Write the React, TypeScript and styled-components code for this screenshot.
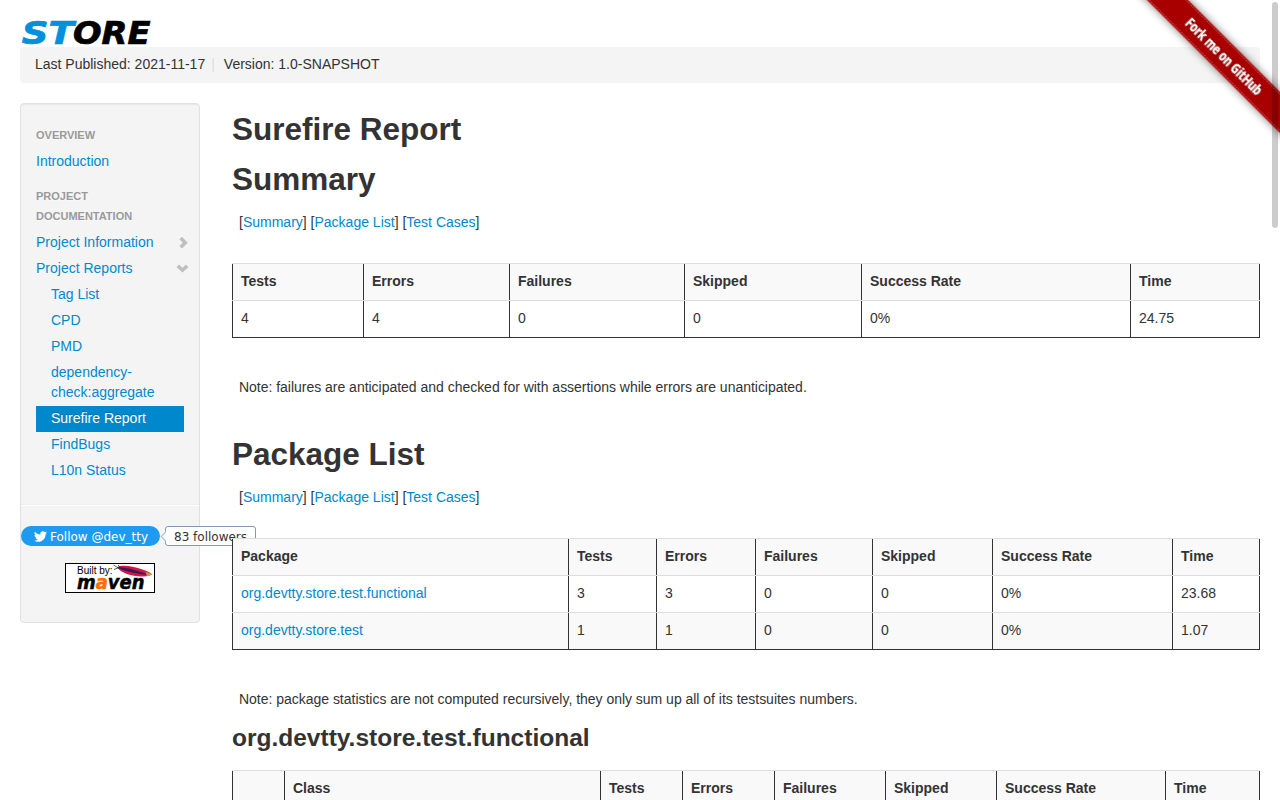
import React from 'react';
import styled, { createGlobalStyle, css } from 'styled-components';

const GlobalStyle = createGlobalStyle`
  * { box-sizing: border-box; }
  html { height: 100%; overflow: hidden; }
  body {
    margin: 0;
    height: 100%;
    overflow: hidden;
    background: #fff;
    color: #333;
    font-family: 'Helvetica Neue', Helvetica, 'Liberation Sans', Arial, sans-serif;
    font-size: 14px;
    line-height: 20px;
  }
`;

const Page = styled.div`
  position: relative;
  height: 800px;
  overflow: hidden;
  padding: 20px 20px 0;
`;

const Logo = styled.svg`
  display: block;
  width: 132px;
  height: 27px;
  overflow: visible;
`;

const Breadcrumb = styled.ul`
  display: flex;
  height: 36px;
  margin: 0 0 20px;
  padding: 7px 15px 9px;
  list-style: none;
  border-radius: 4px;
  background: #f4f4f4;
`;

const Divider = styled.span`
  padding: 0 9px 0 6px;
  color: #ddd;
`;

const Columns = styled.div`
  display: flex;
  align-items: flex-start;
  gap: 32px;
`;

const Sidebar = styled.aside`
  flex: none;
  width: 180px;
  height: 520px;
  padding: 19px 0 0;
  border: 1px solid #e1e1e1;
  border-radius: 4px;
  background: #f4f4f4;
  box-shadow: inset 0 1px 1px rgba(0, 0, 0, 0.05);
`;

const NavList = styled.ul`
  margin: 0;
  padding: 0 15px;
  list-style: none;
  text-shadow: 0 1px 0 rgba(255, 255, 255, 0.5);
`;

const NavHeader = styled.li<{ $spaced?: boolean }>`
  margin-top: ${(p) => (p.$spaced ? '9px' : 0)};
  padding: 2px 0 4px;
  font-size: 11px;
  font-weight: bold;
  color: #999;
  text-transform: uppercase;
`;

const NavItem = styled.li<{ $nested?: boolean; $active?: boolean }>`
  display: flex;
  justify-content: space-between;
  align-items: center;
  padding: 2px ${(p) => (p.$nested ? 15 : 0)}px 4px;
  color: #08c;
  ${(p) =>
    p.$active &&
    css`
      color: #fff;
      background: #08c;
      text-shadow: 0 -1px 0 rgba(0, 0, 0, 0.2);
    `}
`;

const Chevron = styled.svg`
  flex: none;
  width: 14px;
  height: 14px;
  margin-right: -6px;
`;

const Rule = styled.hr`
  height: 2px;
  margin: 20px 0;
  border: 0;
  border-top: 1px solid #eee;
  background: #fff;
`;

const FollowRow = styled.div`
  display: flex;
  align-items: center;
  width: 236px;
  height: 20px;
  font: 12px/20px 'DejaVu Sans', sans-serif;
`;

const FollowButton = styled.span`
  display: flex;
  align-items: center;
  flex: none;
  width: 139px;
  height: 20px;
  padding-left: 13px;
  gap: 3px;
  border-radius: 10px;
  background: #1d9bf0;
  color: #fff;
  white-space: nowrap;
`;

const FollowLabel = styled.span`
  padding-top: 2px;
`;

const Bird = styled.svg`
  width: 13px;
  height: 13px;
`;

const FollowerCount = styled.span`
  position: relative;
  flex: none;
  width: 91px;
  height: 20px;
  margin-left: 5px;
  padding-left: 8px;
  border: 1px solid #8099b0;
  border-radius: 3px;
  background: #fff;
  line-height: 20px;
  white-space: nowrap;

  &::before {
    content: '';
    position: absolute;
    left: -4px;
    top: 6px;
    width: 6px;
    height: 6px;
    border: solid #a5b5c5;
    border-width: 0 0 1px 1px;
    background: #fff;
    transform: rotate(45deg);
  }
`;

const MavenBadge = styled.svg`
  display: block;
  width: 90px;
  height: 30px;
  margin: 17px 0 0 44px;
`;

const Main = styled.main`
  position: relative;
  flex: 1;
  min-width: 0;
  padding-top: 6px;
`;

const Heading = styled.h2`
  margin: 0 0 10px;
  font-size: 31.5px;
  line-height: 40px;
`;

const SubHeading = styled.h3`
  margin: 9px 0 12px;
  font-size: 24.5px;
  line-height: 40px;
`;

const Links = styled.p`
  margin: 13px 0 31px;
  padding-left: 7px;
`;

const Note = styled.p<{ $gap?: number }>`
  margin: 39px 0 ${(p) => p.$gap ?? 0}px;
  padding-left: 7px;
  letter-spacing: -0.02px;
`;

const Link = styled.a`
  color: #08c;
  text-decoration: none;
`;

const Grid = styled.table`
  width: 1028px;
  table-layout: fixed;
  border-collapse: collapse;
  border: 1px inset #333;

  tr:nth-child(odd) {
    background: #f9f9f9;
  }
`;

const cell = css`
  height: 37px;
  padding: 7px 8px 9px;
  border: 1px inset #333;
  border-top: 1px solid #ddd;
  text-align: left;
  vertical-align: top;
  white-space: nowrap;
`;

const Th = styled.th`
  ${cell}
`;

const Td = styled.td`
  ${cell}
`;

const Ribbon = styled.svg`
  position: absolute;
  top: 0;
  right: 0;
  width: 149px;
  height: 149px;
`;

const ScrollThumb = styled.div`
  position: absolute;
  top: 2px;
  right: 2px;
  width: 6px;
  height: 226px;
  border-radius: 3px;
  background: rgba(0, 0, 0, 0.2);
`;

const sections = ['Summary', 'Package List', 'Test Cases'];

const SectionLinks = () => (
  <Links>
    {sections.map((name, i) => (
      <React.Fragment key={name}>
        {i > 0 && ' '}[<Link>{name}</Link>]
      </React.Fragment>
    ))}
  </Links>
);

type TableProps = { widths: number[]; head: string[]; rows: string[][]; linked?: boolean };

const ReportTable = ({ widths, head, rows, linked }: TableProps) => (
  <Grid>
    <colgroup>
      {widths.map((w, i) => (
        <col key={i} width={w} />
      ))}
    </colgroup>
    <tbody>
      <tr>
        {head.map((h, i) => (
          <Th key={i}>{h}</Th>
        ))}
      </tr>
      {rows.map((row, r) => (
        <tr key={r}>
          {row.map((value, i) => (
            <Td key={i}>{linked && i === 0 ? <Link>{value}</Link> : value}</Td>
          ))}
        </tr>
      ))}
    </tbody>
  </Grid>
);

const stats = ['Tests', 'Errors', 'Failures', 'Skipped', 'Success Rate', 'Time'];

const reports = [
  'Tag List',
  'CPD',
  'PMD',
  'dependency-check:aggregate',
  'Surefire Report',
  'FindBugs',
  'L10n Status',
];

export default function App() {
  return (
    <>
      <GlobalStyle />
      <Page>
        <Logo viewBox="0 0 132 27">
          <g
            fontFamily="'DejaVu Sans', sans-serif"
            fontWeight="bold"
            fontStyle="italic"
            fontSize="32"
            strokeWidth="0.7"
          >
            <text x="1.8" y="24.4" textLength="52" lengthAdjust="spacingAndGlyphs" fill="#0090dc" stroke="#0090dc">
              ST
            </text>
            <text x="53" y="24.4" textLength="77.5" lengthAdjust="spacingAndGlyphs" fill="#000" stroke="#000">
              ORE
            </text>
          </g>
        </Logo>
        <Breadcrumb>
          <li>Last Published: 2021-11-17</li>
          <Divider>|</Divider>
          <li>Version: 1.0-SNAPSHOT</li>
        </Breadcrumb>
        <Columns>
          <Sidebar>
            <NavList>
              <NavHeader>Overview</NavHeader>
              <NavItem>Introduction</NavItem>
              <NavHeader $spaced>Project Documentation</NavHeader>
              <NavItem>
                Project Information
                <Chevron viewBox="0 0 14 14">
                  <path d="M4.7 3.1 L9.3 7.7 L4.7 12.3" fill="none" stroke="#bfbfbf" strokeWidth="3.5" />
                </Chevron>
              </NavItem>
              <NavItem>
                Project Reports
                <Chevron viewBox="0 0 14 14">
                  <path d="M1.8 4.9 L6.5 9.2 L11.2 4.9" fill="none" stroke="#bfbfbf" strokeWidth="3.5" />
                </Chevron>
              </NavItem>
              {reports.map((name) => (
                <NavItem key={name} $nested $active={name === 'Surefire Report'}>
                  {name}
                </NavItem>
              ))}
            </NavList>
            <Rule />
            <FollowRow>
              <FollowButton>
                <Bird viewBox="0 0 24 24">
                  <path
                    fill="#fff"
                    d="M23.95 4.57a10 10 0 0 1-2.82.77 4.96 4.96 0 0 0 2.16-2.72c-.95.55-2 .95-3.12 1.18a4.92 4.92 0 0 0-8.38 4.48C7.69 8.09 4.07 6.13 1.64 3.16a4.92 4.92 0 0 0 1.52 6.57 4.9 4.9 0 0 1-2.23-.61v.06c0 2.38 1.7 4.37 3.95 4.83a5 5 0 0 1-2.21.08 4.94 4.94 0 0 0 4.6 3.42A9.87 9.87 0 0 1 0 19.54a13.99 13.99 0 0 0 7.56 2.21c9.05 0 14-7.5 14-13.98 0-.21 0-.42-.02-.63a9.94 9.94 0 0 0 2.46-2.55z"
                  />
                </Bird>
                <FollowLabel>Follow @dev_tty</FollowLabel>
              </FollowButton>
              <FollowerCount>83 followers</FollowerCount>
            </FollowRow>
            <MavenBadge viewBox="0 0 90 30">
              <rect x="0.5" y="0.5" width="89" height="29" fill="#fff" stroke="#000" />
              <text
                x="12"
                y="10.8"
                fontFamily="'Liberation Sans', sans-serif"
                fontSize="10"
                textLength="35.5"
                lengthAdjust="spacingAndGlyphs"
              >
                Built by:
              </text>
              <path d="M52 4 C57 1.5 68 3 76 6 C81 8 85 9 87 11.5 C81 14.5 70 14 62 11 C57 9 54 7 52 4Z" fill="#d3173f" />
              <path d="M53 4.5 C63 4.5 74 9 83 11.5 C73 10.8 61 8.5 53 4.5Z" fill="#35195c" stroke="#35195c" strokeWidth="0.6" />
              <path d="M48.5 2 L55 6 M49 6.5 L54 4.5 M53 2 L56 5" stroke="#333" strokeWidth="0.8" />
              <path d="M80.5 8.8 L87.8 11.3 L82 13.6Z" fill="#c39a45" />
              <text
                x="12"
                y="25.7"
                fontFamily="'DejaVu Sans', sans-serif"
                fontWeight="bold"
                fontStyle="italic"
                fontSize="19"
                textLength="67.5"
                lengthAdjust="spacingAndGlyphs"
                stroke="#000"
                strokeWidth="0.5"
              >
                m<tspan fill="#ff6c00" stroke="#ff6c00">a</tspan>ven
              </text>
            </MavenBadge>
          </Sidebar>
          <Main>
            <Heading>Surefire Report</Heading>
            <Heading>Summary</Heading>
            <SectionLinks />
            <ReportTable
              widths={[131, 146, 175, 177, 269, 129]}
              head={stats}
              rows={[['4', '4', '0', '0', '0%', '24.75']]}
            />
            <Note $gap={37}>Note: failures are anticipated and checked for with assertions while errors are unanticipated.</Note>
            <Heading>Package List</Heading>
            <SectionLinks />
            <ReportTable
              linked
              widths={[336, 88, 99, 117, 120, 180, 87]}
              head={['Package', ...stats]}
              rows={[
                ['org.devtty.store.test.functional', '3', '3', '0', '0', '0%', '23.68'],
                ['org.devtty.store.test', '1', '1', '0', '0', '0%', '1.07'],
              ]}
            />
            <Note>Note: package statistics are not computed recursively, they only sum up all of its testsuites numbers.</Note>
            <SubHeading>org.devtty.store.test.functional</SubHeading>
            <ReportTable widths={[52, 316, 82, 92, 111, 111, 169, 94]} head={['', 'Class', ...stats]} rows={[]} />
          </Main>
        </Columns>
        <Ribbon viewBox="0 0 149 149">
          <defs>
            <filter id="ribbonShadow" x="-20%" y="-80%" width="140%" height="260%">
              <feDropShadow dx="0" dy="0" stdDeviation="4" floodColor="#000" floodOpacity="0.5" />
            </filter>
            <filter id="textShadow" x="-20%" y="-50%" width="140%" height="200%">
              <feDropShadow dx="0" dy="0" stdDeviation="1.2" floodColor="#000" floodOpacity="0.5" />
            </filter>
          </defs>
          <g transform="translate(93 56.5) rotate(45)">
            <rect x="-130" y="-14.5" width="260" height="29" fill="#a80000" filter="url(#ribbonShadow)" />
            <path d="M-130 -12.8 H130 M-130 12.8 H130" stroke="#d07070" strokeWidth="0.8" strokeDasharray="1.5 1" />
            <text
              y="4.8"
              textAnchor="middle"
              fontFamily="'Open Sans', sans-serif"
              fontWeight="bold"
              fontSize="14"
              textLength="102"
              lengthAdjust="spacingAndGlyphs"
              fill="#fff"
              stroke="#fff"
              strokeWidth="0.25"
              filter="url(#textShadow)"
            >
              Fork me on GitHub
            </text>
          </g>
        </Ribbon>
        <ScrollThumb />
      </Page>
    </>
  );
}
